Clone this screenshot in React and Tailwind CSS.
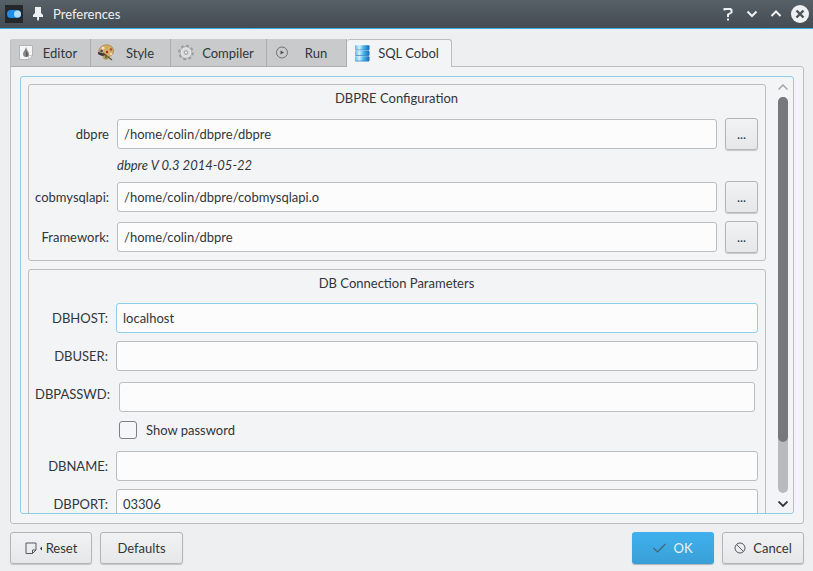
import React from "react";

const field =
  "block h-[30px] w-full min-w-0 rounded-[3px] border border-[#bcbdbf] bg-[#fcfcfc] px-1.5 text-[13px] text-[#31363b] outline-none";
const button =
  "flex h-8 items-center rounded-[3px] border border-[#b4b5b7] bg-linear-to-b from-[#f1f2f3] to-[#e6e7e9] shadow-[0_1px_1px_rgba(0,0,0,0.18)]";

function DropIcon() {
  return (
    <svg width="16" height="18" viewBox="0 0 16 18" className="shrink-0">
      <path d="M1.500 1.500h13v10l-4 4h-9z" fill="#f6f6f6" stroke="#b4b5b6" />
      <path d="M10.500 15.500v-4h4z" fill="#fff" stroke="#b5b5b5" strokeWidth=".7" />
      <path d="M8 3C7.500 6 5 7.500 5 10a3 3 0 0 0 6 0C11 7.500 8.500 6 8 3z" fill="#858585" />
      <path d="M8 5c0 3 2 4 2 6a2 2 0 0 1-2 2z" fill="#5e5e5e" />
    </svg>
  );
}

function PaletteIcon() {
  return (
    <svg width="16" height="18" viewBox="0 0 16 18" className="shrink-0">
      <path
        d="M2 4c3-4 9-4 12-1 3 4 1 8-2 9-2 1-1 3-3 3-3 1-4-1-4-3 0-1-1-2-3-1-1-2-2-5 0-7z"
        fill="#d6ad6c"
        stroke="#a57b40"
        strokeWidth=".7"
      />
      <path d="M5 9l9 7" stroke="#6d5130" strokeWidth="1.300" />
      <path d="M0 8l4 1 4 2-4 1-4-2z" fill="#3e3434" />
      <circle cx="5" cy="4" r="1.500" fill="#eee3c4" />
      <circle cx="9" cy="3.500" r="1.300" fill="#c9b23e" />
      <circle cx="13" cy="5.500" r="1.200" fill="#b34a2c" />
      <circle cx="3.500" cy="7" r="1.300" fill="#35477e" />
      <circle cx="13" cy="10" r="1.200" fill="#e9dcc0" />
      <circle cx="8" cy="13" r="1.500" fill="#5c7a35" />
      <circle cx="9" cy="8" r="1.200" fill="#9c3329" />
    </svg>
  );
}

function GearIcon() {
  return (
    <svg width="16" height="18" viewBox="0 0 16 18" className="shrink-0">
      <circle cx="8" cy="8.500" r="6.800" fill="none" stroke="#97989a" strokeWidth="2" strokeDasharray="2.670 2.670" />
      <circle cx="8" cy="8.500" r="5.800" fill="#e6e6e6" stroke="#a0a1a2" strokeWidth=".8" />
      <circle cx="8" cy="8.500" r="4" fill="#dadada" />
      <circle cx="8" cy="8.500" r="1.700" fill="#eee" stroke="#858585" strokeWidth=".8" />
    </svg>
  );
}

function RunIcon() {
  return (
    <svg width="16" height="18" viewBox="0 0 16 18" className="shrink-0">
      <circle cx="8" cy="8.500" r="5.500" fill="none" stroke="#6e7072" />
      <path d="M6.500 6.500v4l3.500-2z" fill="#505355" />
    </svg>
  );
}

function DatabaseIcon() {
  return (
    <svg width="16" height="18" viewBox="0 0 16 18" className="shrink-0">
      <defs>
        <linearGradient id="disk">
          <stop offset="0" stopColor="#5db9ea" />
          <stop offset=".3" stopColor="#d3f0fc" />
          <stop offset=".6" stopColor="#47b2ea" />
          <stop offset="1" stopColor="#1668b4" />
        </linearGradient>
      </defs>
      {[0, 5.5, 11].map((y) => (
        <g key={y}>
          <rect x="1" y={y + 0.3} width="14.500" height="5" rx="1" fill="url(#disk)" />
          <path d={`M1.500 ${y + 5}h13.500`} stroke="#2c7fbe" strokeWidth=".7" />
        </g>
      ))}
    </svg>
  );
}

const tabs = [
  { name: "Editor", Icon: DropIcon, width: "w-[81px]" },
  { name: "Style", Icon: PaletteIcon, width: "w-20" },
  { name: "Compiler", Icon: GearIcon, width: "w-24" },
  { name: "Run", Icon: RunIcon, width: "w-20" },
];

function TitleBar() {
  return (
    <header className="flex h-[29px] shrink-0 items-center border-b border-[#3daee9] bg-linear-to-b from-[#566067] to-[#454c53] pr-1 pl-[5px] text-[#eff0f1]">
      <svg width="18" height="18" viewBox="0 0 18 18">
        <rect width="18" height="18" fill="#25282b" />
        <rect x="2" y="5" width="14" height="8" rx="4" fill="#1d8ceb" />
        <circle cx="12.500" cy="9" r="3.500" fill="#b4ddfb" />
      </svg>
      <svg width="10" height="14" viewBox="0 0 10 14" className="ml-[10px]" fill="currentColor">
        <path d="M2 0h6v6l2 2v2H6v2.500L5 14l-1-1.500V10H0V8l2-2z" />
      </svg>
      <h1 className="ml-[10px] flex-1">Preferences</h1>
      <div className="flex items-center gap-1.5">
        <button type="button" aria-label="Help" className="flex h-[18px] w-[18px] items-center justify-center">
          <svg width="10" height="14" viewBox="0 0 10 14" fill="none" stroke="currentColor" strokeWidth="2">
            <path d="M1.500 3.500V2h6L8.500 3v2.500L5 7.500V10M4 12.500h2" />
          </svg>
        </button>
        <button type="button" aria-label="Minimize" className="flex h-[18px] w-[18px] items-center justify-center">
          <svg width="12" height="8" viewBox="0 0 12 8" fill="none" stroke="currentColor" strokeWidth="2">
            <path d="M1.500 1.500L6 6l4.500-4.500" />
          </svg>
        </button>
        <button type="button" aria-label="Maximize" className="flex h-[18px] w-[18px] items-center justify-center">
          <svg width="12" height="8" viewBox="0 0 12 8" fill="none" stroke="currentColor" strokeWidth="2">
            <path d="M1.500 6L6 1.500 10.500 6" />
          </svg>
        </button>
        <button type="button" aria-label="Close" className="h-[18px] w-[18px]">
          <svg width="18" height="18" viewBox="0 0 18 18">
            <circle cx="9" cy="9" r="9" fill="#eff0f1" />
            <path d="M5.500 5.500l7 7M12.500 5.500l-7 7" stroke="#4a5259" strokeWidth="2.400" />
          </svg>
        </button>
      </div>
    </header>
  );
}

function PathRow({ id, label, value }) {
  return (
    <>
      <label htmlFor={id} className="text-right whitespace-nowrap">
        {label}
      </label>
      <input id={id} defaultValue={value} className={field} />
      <button type="button" aria-label={`Browse ${label}`} className={`${button} w-[33px] justify-center`}>
        ...
      </button>
    </>
  );
}

function ParamRow({ id, label, value, focused }) {
  return (
    <>
      <label htmlFor={id} className="text-right leading-[30px] whitespace-nowrap">
        {label}
      </label>
      <input
        id={id}
        defaultValue={value}
        className={focused ? field.replace("border-[#bcbdbf]", "border-[#8fcee8]") : field}
      />
    </>
  );
}

function Group({ title, children }) {
  return (
    <section className="rounded-[3px] border border-[#bcbdbf] px-[7px] pb-[7px] pl-1.5">
      <h2 className="mb-[7px] text-center leading-[26px]">{title}</h2>
      {children}
    </section>
  );
}

function ScrollBar() {
  return (
    <div className="flex w-[10px] shrink-0 flex-col items-center pt-[7px] pb-1.5">
      <svg width="10" height="6" viewBox="0 0 10 6" fill="none" stroke="#a5a6a8" strokeWidth="1.500">
        <path d="M.5 5.500L5 1l4.500 4.500" />
      </svg>
      <div className="mt-[7px] mb-2 w-full flex-1 rounded-full bg-[#b9babd]">
        <div className="h-[87%] rounded-full bg-[#77787c]" />
      </div>
      <svg width="10" height="6" viewBox="0 0 10 6" fill="none" stroke="#31363b" strokeWidth="1.800">
        <path d="M.5.500L5 5 9.500.500" />
      </svg>
    </div>
  );
}

export default function App() {
  return (
    <div className="flex h-screen flex-col bg-[#eeeff1] font-[Lato,sans-serif] text-[13px] leading-[15px] text-[#31363b]">
      <TitleBar />
      <main className="flex min-h-0 flex-1 flex-col px-[9px] pt-[10px] pb-[7px] pl-[10px]">
        <div role="tablist" className="relative z-10 -mb-px flex h-7 shrink-0">
          {tabs.map(({ name, Icon, width }) => (
            <button
              key={name}
              type="button"
              role="tab"
              aria-selected="false"
              className={`${width} flex items-center border-r border-b border-[#acadaf] bg-[#c9cacc] pt-px pr-1 pl-[7px] first:rounded-tl-[3px] first:border-l first:border-l-[#bcbdbf]`}
            >
              <Icon />
              <span className="flex-1 text-center">{name}</span>
            </button>
          ))}
          <button
            type="button"
            role="tab"
            aria-selected="true"
            className="flex w-[105px] items-center rounded-t-[3px] border-t border-r border-[#bcbdbf] bg-[#f3f4f6] pr-1 pl-[7px]"
          >
            <DatabaseIcon />
            <span className="flex-1 text-center whitespace-nowrap">SQL Cobol</span>
          </button>
        </div>

        <div className="flex min-h-0 flex-1 rounded-[3px] rounded-tl-none border border-[#bcbdbf] bg-[#f3f4f6] p-[9px]">
          <div className="flex min-w-0 flex-1 rounded-[3px] border border-[#8fcee8] pr-[5px] pl-[7px]">
            <div className="mr-3 flex min-w-0 flex-1 flex-col gap-2 overflow-y-auto pt-[7px] [scrollbar-width:none]">
              <Group title="DBPRE Configuration">
                <div className="grid grid-cols-[74px_1fr_33px] items-center gap-2">
                  <PathRow id="dbpre" label="dbpre" value="/home/colin/dbpre/dbpre" />
                  <p className="col-start-2 col-end-4 italic">dbpre V 0.3 2014-05-22</p>
                  <PathRow id="api" label="cobmysqlapi:" value="/home/colin/dbpre/cobmysqlapi.o" />
                  <PathRow id="framework" label="Framework:" value="/home/colin/dbpre" />
                </div>
              </Group>
              <Group title="DB Connection Parameters">
                <div className="grid grid-cols-[73px_1fr] items-start gap-2">
                  <ParamRow id="host" label="DBHOST:" value="localhost" focused />
                  <ParamRow id="user" label="DBUSER:" value="" />
                  <label htmlFor="password" className="text-right leading-[30px] whitespace-nowrap">
                    DBPASSWD:
                  </label>
                  <div className="flex flex-col gap-2 p-[3px]">
                    <input id="password" type="password" className={field} />
                    <label className="flex h-5 items-center gap-[9px]">
                      <input
                        type="checkbox"
                        className="h-[18px] w-[18px] appearance-none rounded-[3px] border border-[#7d8083] bg-[#f5f6f7] checked:bg-[#3daee9]"
                      />
                      Show password
                    </label>
                  </div>
                  <ParamRow id="name" label="DBNAME:" value="" />
                  <ParamRow id="port" label="DBPORT:" value="03306" />
                </div>
              </Group>
            </div>
            <ScrollBar />
          </div>
        </div>

        <footer className="mt-2 flex shrink-0 gap-2">
          <button type="button" className={`${button} w-[82px] justify-center gap-[3px]`}>
            <svg width="18" height="13" viewBox="0 0 18 13">
              <path d="M1 1h10v7l-3.500 3.500H1zM7.500 11.500V8H11" fill="none" stroke="#55595d" />
              <path d="M17 4.500v4L15 6.500z" fill="#31363b" />
            </svg>
            Reset
          </button>
          <button type="button" className={`${button} w-[83px] justify-center`}>
            Defaults
          </button>
          <button
            type="button"
            className="ml-auto flex h-8 w-[82px] items-center justify-center gap-[7px] rounded-[3px] bg-linear-to-b from-[#3fb1ee] to-[#3a9fd6] text-[#eff0f1] shadow-[0_1px_1px_rgba(0,0,0,0.25)]"
          >
            <svg width="13" height="10" viewBox="0 0 13 10" fill="none" stroke="#456478" strokeWidth="1.200">
              <path d="M.5 5l4 4 8-8" />
            </svg>
            OK
          </button>
          <button type="button" className={`${button} w-[82px] justify-center gap-[7px]`}>
            <svg width="12" height="12" viewBox="0 0 12 12" fill="none" stroke="#55595d">
              <circle cx="6" cy="6" r="5" />
              <path d="M2.500 2.500l7 7" />
            </svg>
            Cancel
          </button>
        </footer>
      </main>
    </div>
  );
}
